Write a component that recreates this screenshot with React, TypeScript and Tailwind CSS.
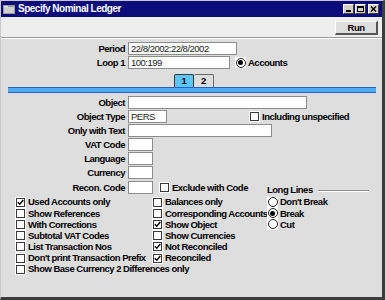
import React from "react";

const font = "font-['Liberation_Sans',Arial,sans-serif]";
const bold = "font-bold text-[9.5px] tracking-[-0.5px] leading-none whitespace-nowrap";

function Check({ on }: { on?: boolean }) {
  return (
    <span className="w-[11px] h-[11px] bg-white p-[1px] flex shrink-0">
      <span className="w-[9px] h-[9px] border border-[#3a3a3a] bg-white flex items-center justify-center">
        {on && (
          <svg width="7" height="7" viewBox="0 0 7 7">
            <path d="M0.8 3.2 L2.8 5.3 L6.3 1" stroke="#000" strokeWidth="1.4" fill="none" />
          </svg>
        )}
      </span>
    </span>
  );
}

function Radio({ on }: { on?: boolean }) {
  return (
    <span className="w-[11px] h-[11px] bg-white flex items-center justify-center shrink-0">
      <span className="w-[10px] h-[10px] rounded-full border border-[#222] bg-white flex items-center justify-center">
        {on && <span className="w-[5px] h-[5px] rounded-full bg-black" />}
      </span>
    </span>
  );
}

function Field({ label, w, value }: { label: string; w: string; value?: string }) {
  return (
    <div className="flex items-center h-[13px]">
      <div className={`w-[124px] text-right text-black ${bold}`}>{label}</div>
      <div className={`ml-[3px] h-[13px] bg-white border border-[#8c8c8c] text-[9.5px] tracking-[-0.5px] leading-[11px] pl-[2px] text-[#222] ${w}`}>
        {value}
      </div>
    </div>
  );
}

function Opt({ kind, on, text }: { kind: "c" | "r"; on?: boolean; text: string }) {
  return (
    <div className="flex items-center h-[11.2px] gap-[2px]">
      {kind === "c" ? <Check on={on} /> : <Radio on={on} />}
      <span className={bold}>{text}</span>
    </div>
  );
}

export default function App() {
  return (
    <div className={`${font} w-[385px] h-[300px] flex flex-col bg-[#dedede] border-l border-t border-[#c8c8c8] border-r-[3px] border-r-[#3c3c3c] border-b-[3px] border-b-[#3c3c3c]`}>
      {/* title bar */}
      <div className="h-[16px] bg-[#0b0b7c] flex items-center pl-[2px] pr-[2px]">
        <svg width="12" height="9" viewBox="0 0 12 9" className="shrink-0">
          <rect x="0" y="0" width="12" height="9" fill="#9a9a9a" />
          <rect x="1" y="2" width="10" height="6" fill="#d0d0d0" />
          <rect x="1" y="1" width="4" height="1" fill="#e8e8e8" />
        </svg>
        <span className="ml-[3px] text-white font-bold text-[10px] tracking-[-0.5px] leading-none">Specify Nominal Ledger</span>
        <div className="ml-auto flex gap-[1px] mr-[1px]">
          <div className="w-[11px] h-[10px] bg-[#d4d0c8] border border-t-white border-l-white border-r-[#404040] border-b-[#404040] flex items-end justify-center pb-[1px]">
            <span className="w-[5px] h-[2px] bg-black" />
          </div>
          <div className="w-[11px] h-[10px] bg-[#d4d0c8] border border-t-white border-l-white border-r-[#404040] border-b-[#404040] flex items-center justify-center">
            <span className="w-[7px] h-[6px] border border-black border-t-2" />
          </div>
          <div className="ml-[1px] w-[11px] h-[10px] bg-[#d4d0c8] border border-t-white border-l-white border-r-[#404040] border-b-[#404040] flex items-center justify-center">
            <svg width="7" height="6" viewBox="0 0 7 6">
              <path d="M1 0.5 L6 5.5 M6 0.5 L1 5.5" stroke="#000" strokeWidth="1.4" />
            </svg>
          </div>
        </div>
      </div>

      {/* toolbar */}
      <div className="h-[21px] bg-[#eeeeee] border-b border-[#9a9a9a] flex justify-end items-start pt-[4px] pr-[4px]">
        <div className={`w-[43px] h-[14px] bg-[#dedede] border border-t-white border-l-white border-r-[2px] border-b-[2px] border-r-[#555] border-b-[#555] flex items-center justify-center ${bold}`}>
          Run
        </div>
      </div>

      {/* main */}
      <div className="flex-1 border-t border-white flex flex-col pt-[3px] text-black">
        <Field label="Period" w="w-[109px]" value="22/8/2002:22/8/2002" />
        <div className="mt-[1px] flex items-center">
          <Field label="Loop 1" w="w-[102px]" value="100:199" />
          <div className="ml-[5px] flex items-center gap-[2px]">
            <Radio on />
            <span className={bold}>Accounts</span>
          </div>
        </div>

        {/* tabs */}
        <div className="mt-[5px] pl-[173px] flex items-end h-[13px]">
          <div className={`w-[20px] h-[13px] bg-[#5cc6fb] border border-[#3a3a3a] border-b-0 rounded-t-[2px] flex items-center justify-center ${bold}`}>1</div>
          <div className={`w-[20px] h-[13px] bg-[#dedede] border border-[#6a6a6a] border-b-0 border-l-0 rounded-t-[2px] flex items-center justify-center ${bold}`}>2</div>
        </div>
        <div className="ml-[7px] w-[368px] h-[6px] flex flex-col border-y border-[#2a5fc4]">
          <div className="h-[2px] bg-[#4eaaf7]" />
          <div className="h-[1px] bg-[#2a6bd6]" />
          <div className="h-[2px] bg-[#4eaaf7]" />
        </div>

        <div className="mt-[3px] flex flex-col gap-[1px]">
          <Field label="Object" w="w-[179px]" />
          <div className="flex items-center">
            <Field label="Object Type" w="w-[39px]" value="PERS" />
            <div className="ml-[82px] flex items-center gap-[2px]">
              <Check />
              <span className={bold}>Including unspecified</span>
            </div>
          </div>
          <Field label="Only with Text" w="w-[144px]" />
          <Field label="VAT Code" w="w-[25px]" />
          <Field label="Language" w="w-[25px]" />
          <Field label="Currency" w="w-[25px]" />
          <div className="flex items-center">
            <div className="w-[266px] flex items-center">
              <Field label="Recon. Code" w="w-[25px]" />
              <div className="ml-[6px] flex items-center gap-[2px]">
                <Check />
                <span className={bold}>Exclude with Code</span>
              </div>
            </div>
            <div className="flex-1 flex items-center pt-[5px] pr-[13px]">
              <span className={bold}>Long Lines</span>
              <div className="ml-[5px] flex-1 h-[2px] border-t border-[#8c8c8c] border-b border-b-white mt-[3px]" />
            </div>
          </div>
        </div>

        {/* options */}
        <div className="mt-[2px] flex">
          <div className="pl-[14px] w-[151px] flex flex-col">
            <Opt kind="c" on text="Used Accounts only" />
            <Opt kind="c" text="Show References" />
            <Opt kind="c" text="With Corrections" />
            <Opt kind="c" text="Subtotal VAT Codes" />
            <Opt kind="c" text="List Transaction Nos" />
            <Opt kind="c" text="Don't print Transaction Prefix" />
            <Opt kind="c" text="Show Base Currency 2 Differences only" />
          </div>
          <div className="w-[115px] flex flex-col">
            <Opt kind="c" text="Balances only" />
            <Opt kind="c" text="Corresponding Accounts" />
            <Opt kind="c" on text="Show Object" />
            <Opt kind="c" text="Show Currencies" />
            <Opt kind="c" on text="Not Reconciled" />
            <Opt kind="c" on text="Reconciled" />
          </div>
          <div className="flex flex-col">
            <Opt kind="r" text="Don't Break" />
            <Opt kind="r" on text="Break" />
            <Opt kind="r" text="Cut" />
          </div>
        </div>
      </div>
    </div>
  );
}
